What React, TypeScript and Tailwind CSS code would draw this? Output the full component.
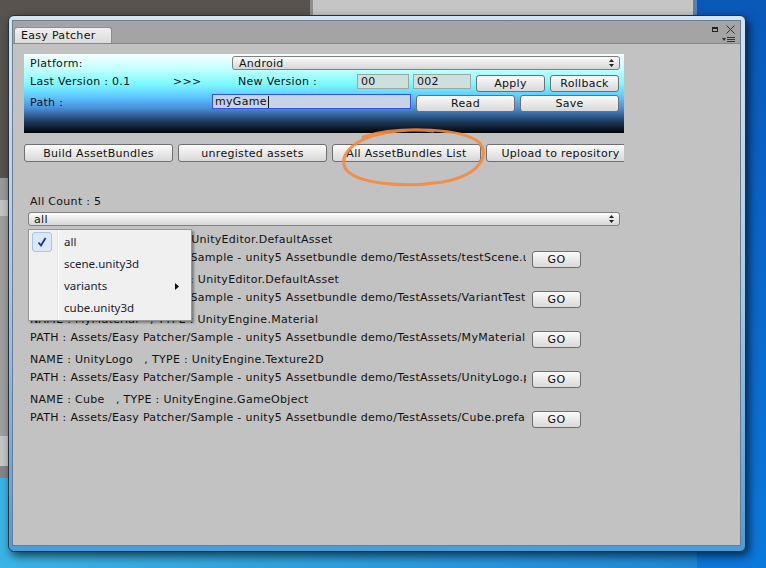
import React from "react";
import clsx from "clsx";

const ui = "font-['DejaVu_Sans',sans-serif] tracking-[0.3px]";

function Btn({ className, children }: { className?: string; children: React.ReactNode }) {
  return (
    <div
      className={clsx(
        "shrink-0 flex items-center justify-center rounded-[3px] border border-[#6f6f6f] bg-gradient-to-b from-[#fbfbfb] to-[#d8d8d8] text-[11px] text-[#111] leading-none",
        className
      )}
    >
      {children}
    </div>
  );
}

function Popup({ className, label }: { className?: string; label: string }) {
  return (
    <div
      className={clsx(
        "h-[14px] flex items-center justify-between rounded-[3px] border border-[#808080] bg-gradient-to-b from-[#fcfcfc] to-[#d6d6d6] pl-[5px] pr-[5px] text-[11px] text-[#111] leading-none",
        className
      )}
    >
      <span>{label}</span>
      <svg width="5" height="8" viewBox="0 0 5 8">
        <path d="M2.5 0 L5 3 L0 3 Z M0 5 L5 5 L2.5 8 Z" fill="#222" />
      </svg>
    </div>
  );
}

function Field({ className, children }: { className?: string; children: React.ReactNode }) {
  return (
    <div
      className={clsx(
        "shrink-0 h-[15px] flex items-center border border-[#98a8a6] bg-[#cfdfdc] pl-[3px] text-[11px] text-[#111] leading-none",
        className
      )}
    >
      {children}
    </div>
  );
}

const assets = [
  {
    name: "NAME : testScene   , TYPE : UnityEditor.DefaultAsset",
    path: "PATH : Assets/Easy Patcher/Sample - unity5 Assetbundle demo/TestAssets/testScene.unity",
  },
  {
    name: "NAME : VariantTest   , TYPE : UnityEditor.DefaultAsset",
    path: "PATH : Assets/Easy Patcher/Sample - unity5 Assetbundle demo/TestAssets/VariantTest",
  },
  {
    name: "NAME : MyMaterial   , TYPE : UnityEngine.Material",
    path: "PATH : Assets/Easy Patcher/Sample - unity5 Assetbundle demo/TestAssets/MyMaterial.mat",
  },
  {
    name: "NAME : UnityLogo   , TYPE : UnityEngine.Texture2D",
    path: "PATH : Assets/Easy Patcher/Sample - unity5 Assetbundle demo/TestAssets/UnityLogo.png",
  },
  {
    name: "NAME : Cube   , TYPE : UnityEngine.GameObject",
    path: "PATH : Assets/Easy Patcher/Sample - unity5 Assetbundle demo/TestAssets/Cube.prefab",
  },
];

const menuItems = ["all", "scene.unity3d", "variants", "cube.unity3d"];

export default function App() {
  return (
    <div className={clsx("relative w-[766px] h-[568px] overflow-hidden bg-[#0b62c2]", ui)}>
      {/* desktop behind the window */}
      <div className="absolute left-0 top-0 w-[310px] h-[178px] bg-[#58534e]" />
      <div className="absolute left-[310px] top-0 w-[3px] h-[16px] bg-[#8d8d8d]" />
      <div className="absolute left-[313px] top-0 w-[380px] h-[16px] bg-[#c5c5c5]" />
      <div className="absolute left-[693px] top-0 w-[4px] h-[16px] bg-[#5a7fb0]" />
      <div className="absolute left-[697px] top-0 w-[69px] h-[568px] bg-gradient-to-b from-[#0a58b8] to-[#0b78dc]" />
      <div className="absolute left-0 top-[178px] w-[10px] h-[300px] flex flex-col">
        <div className="h-[22px] bg-[#9a9a9a]" />
        <div className="h-[16px] bg-[#c3c3c3]" />
        <div className="flex-1 bg-[#a0a0a0]" />
        <div className="h-[30px] bg-[#c6c6c6]" />
        <div className="h-[12px] bg-[#858585]" />
      </div>
      <div className="absolute left-0 top-[478px] w-[697px] h-[90px] bg-gradient-to-r from-[#3ab4e4] to-[#1d88d8]" />

      {/* window */}
      <div className="relative ml-[8px] mt-[15px] w-[738px] h-[537px] rounded-[6px] border border-[#22303f] bg-gradient-to-b from-[#d3e4f3] via-[#a9c9e6] to-[#4a9cd8] pl-[3px] pt-[4px] pr-[4px] pb-[5px] shadow-[3px_4px_10px_rgba(0,0,0,0.65)]">
        <div className="w-full h-full flex flex-col border border-[#6a7c90] bg-[#c2c2c2]">
          {/* tab bar */}
          <div className="h-[23px] shrink-0 flex border-b border-[#888] bg-[#a4a4a4]">
            <div className="mt-[6px] ml-[1px] w-[98px] h-[16px] rounded-t-[3px] border border-b-0 border-[#8e8e8e] bg-gradient-to-b from-[#efefef] to-[#dcdcdc] pl-[6px] text-[11px] leading-[16px] text-[#111]">
              Easy Patcher
            </div>
            <div className="ml-auto mr-[5px] pt-[4px] flex flex-col items-end">
              <div className="flex items-center gap-[8px]">
                <div className="w-[6px] h-[5px] border border-[#222] border-t-2" />
                <svg width="9" height="9" viewBox="0 0 9 9">
                  <path d="M0.5 0.5 L8.5 8.5 M8.5 0.5 L0.5 8.5" stroke="#333" strokeWidth="1" />
                </svg>
              </div>
              <div className="mt-[3px] flex items-center gap-[1px]">
                <svg width="4" height="3" viewBox="0 0 4 3">
                  <path d="M0 0 L4 0 L2 3 Z" fill="#333" />
                </svg>
                <svg width="8" height="5" viewBox="0 0 8 5">
                  <path d="M0 0.5 H8 M0 2.5 H8 M0 4.5 H8" stroke="#333" strokeWidth="1" />
                </svg>
              </div>
            </div>
          </div>

          {/* content */}
          <div className="relative flex-1 pl-[11px] pt-[10px] text-[11px] text-[#111]">
            {/* header panel */}
            <div className="w-[600px] h-[79px] flex flex-col pl-[6px] pr-[4px] pt-[2px] bg-[linear-gradient(to_bottom,#f6ffff_0%,#b8ffff_22%,#7cfaff_38%,#5cc4ff_55%,#4a92dc_68%,#1f3d5e_85%,#000408_100%)]">
              <div className="h-[14px] flex items-center">
                <div className="w-[202px] leading-none">Platform:</div>
                <Popup className="flex-1 pl-[6px]" label="Android" />
              </div>
              <div className="mt-[4px] h-[18px] flex items-start">
                <div className="w-[143px] h-[16px] leading-[16px]">Last Version : 0.1</div>
                <div className="w-[65px] h-[16px] leading-[16px]">&gt;&gt;&gt;</div>
                <div className="w-[119px] h-[16px] leading-[16px]">New Version :</div>
                <Field className="w-[52px]">00</Field>
                <Field className="ml-[4px] w-[58px]">002</Field>
                <Btn className="ml-[5px] mt-[1px] w-[69px] h-[17px]">Apply</Btn>
                <Btn className="ml-[5px] mt-[1px] w-[69px] h-[17px]">Rollback</Btn>
              </div>
              <div className="mt-[2px] h-[18px] flex items-start">
                <div className="w-[182px] h-[17px] leading-[17px]">Path :</div>
                <div className="w-[199px] h-[15px] shrink-0 flex items-center border border-[#3252e0] bg-[#c6d4e6] pl-[2px] text-[11px] leading-none">
                  myGame
                  <span className="ml-[1px] w-[1px] h-[12px] bg-[#111]" />
                </div>
                <Btn className="ml-[5px] mt-[1px] w-[99px] h-[17px]">Read</Btn>
                <Btn className="ml-[5px] mt-[1px] w-[99px] h-[17px]">Save</Btn>
              </div>
            </div>

            {/* main buttons */}
            <div className="mt-[11px] w-[600px] h-[18px] flex gap-[5px] overflow-hidden">
              <Btn className="w-[149px] h-[18px]">Build AssetBundles</Btn>
              <Btn className="w-[149px] h-[18px]">unregisted assets</Btn>
              <Btn className="w-[149px] h-[18px]">All AssetBundles List</Btn>
              <Btn className="w-[149px] h-[18px]">Upload to repository</Btn>
            </div>

            <div className="mt-[32px] pl-[6px] h-[16px] leading-[16px]">All Count : 5</div>
            <Popup className="mt-[2px] ml-[4px] w-[592px]" label="all" />

            {/* asset list */}
            <div className="mt-[5px] pl-[6px] flex flex-col gap-[4px]">
              {assets.map((a) => (
                <div key={a.path} className="flex flex-col">
                  <div className="h-[18px] leading-[18px] whitespace-pre">{a.name}</div>
                  <div className="h-[18px] flex items-center">
                    <div className="w-[496px] overflow-hidden whitespace-pre leading-[18px]">{a.path}</div>
                    <Btn className="ml-[6px] mt-[2px] w-[49px] h-[17px]">GO</Btn>
                  </div>
                </div>
              ))}
            </div>

            {/* annotation ellipse */}
            <svg className="absolute left-[320px] top-[80px] pointer-events-none" width="180" height="70" viewBox="0 0 180 70">
              <g fill="none" stroke="#f58a3c" strokeWidth="3" strokeLinecap="round" opacity="0.9">
                <path d="M30 13 C 60 3, 120 3, 143 16 C 158 26, 152 50, 110 58 C 70 64, 22 60, 12 44 C 6 30, 22 14, 52 9 C 68 6, 88 5, 100 7" />
              </g>
            </svg>

            {/* dropdown menu */}
            <div className="absolute left-[15px] top-[185px] w-[164px] h-[92px] border border-[#979797] bg-[#f0f0f0] shadow-[2px_2px_2px_rgba(0,0,0,0.35)] font-['Noto_Sans',sans-serif] tracking-normal text-[11.5px] text-[#1a1a2e] flex">
              <div className="w-[29px] shrink-0 border-r border-[#e2e2e2] pl-[3px] pt-[2px]">
                <div className="w-[20px] h-[20px] rounded-[3px] border border-[#a9c3ea] bg-[#dce8f7] flex items-center justify-center">
                  <svg width="10" height="10" viewBox="0 0 10 10">
                    <path d="M1.5 5.5 L4 8.5 L8.5 1" fill="none" stroke="#1f2f9c" strokeWidth="1.8" />
                  </svg>
                </div>
              </div>
              <div className="flex-1 flex flex-col pt-[1px] pl-[5px] border-l border-white">
                {menuItems.map((m) => (
                  <div key={m} className="h-[22px] flex items-center justify-between pr-[12px]">
                    <span>{m}</span>
                    {m === "variants" && (
                      <svg width="4" height="7" viewBox="0 0 4 7">
                        <path d="M0 0 L4 3.5 L0 7 Z" fill="#111" />
                      </svg>
                    )}
                  </div>
                ))}
              </div>
            </div>
          </div>
        </div>
      </div>
    </div>
  );
}
